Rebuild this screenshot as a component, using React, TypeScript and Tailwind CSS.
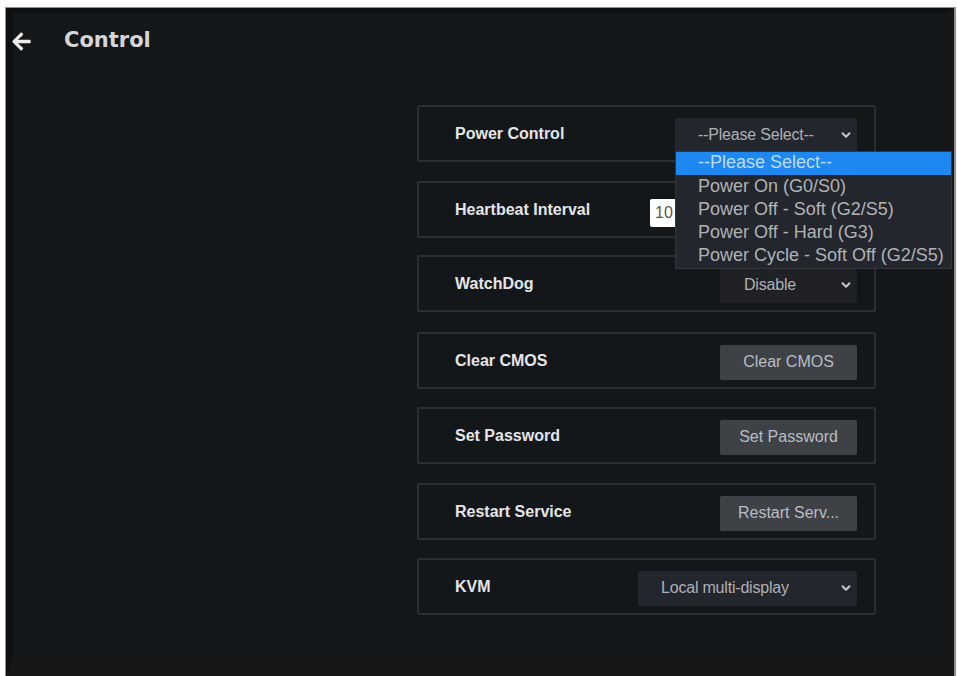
import { ChevronDown } from "lucide-react";
import { FaArrowLeft } from "react-icons/fa";

const MENU_ITEMS = [
  "Power On (G0/S0)",
  "Power Off - Soft (G2/S5)",
  "Power Off - Hard (G3)",
  "Power Cycle - Soft Off (G2/S5)",
];

function FakeSelect({ label, width, textClass, bg }: { label: string; width: string; textClass: string; bg: string }) {
  return (
    <div className={`${width} ${bg} mt-[3px] h-[35px] flex items-center justify-between rounded-[2px] pr-[4px] text-[16px] tracking-[-0.2px] text-[#aeb0b5]`}>
      <span className={textClass}>{label}</span>
      <ChevronDown className="w-[14px] h-[14px] text-[#c4c6ca]" strokeWidth={3.5} />
    </div>
  );
}

function ActionButton({ label }: { label: string }) {
  return (
    <button className="mt-[3px] w-[137px] h-[35px] rounded-[2px] bg-[#3e4146] text-[16px] whitespace-nowrap text-[#b9bdc4] text-center">
      {label}
    </button>
  );
}

function Row({ title, mt, children }: { title: string; mt: string; children: React.ReactNode }) {
  return (
    <div className={`${mt} h-[57px] flex items-center justify-between border-2 border-[#2b2e33] rounded-[2px] pl-[36px] pr-[17px]`}>
      <span className="text-[16px] font-bold text-[#e4e5e7]">{title}</span>
      {children}
    </div>
  );
}

export default function App() {
  return (
    <div className="w-[957px] h-[676px] bg-white pl-[5px] pt-[7px] overflow-hidden font-['Liberation_Sans',Arial,sans-serif]">
      <div className="w-[951px] h-[669px] border-l border-t border-r-2 border-[#8f9092]">
        <div className="relative h-full bg-[#14171a] border-l-[7px] border-l-[#0e0f11] border-t-[5px] border-t-[#0e0f11] border-r-[10px] border-r-[#17171a] border-b-[20px] border-b-[#17171a]">
          <div className="flex items-center h-[56px] -ml-[2px]">
            <FaArrowLeft className="w-[21px] h-[21px] text-[#ececec]" />
            <span className="ml-[32px] text-[21px] font-bold text-[#d6d6d6] font-['DejaVu_Sans',sans-serif]">Control</span>
          </div>

          <div className="ml-[404px] w-[459px] mt-[36px]">
            <Row title="Power Control" mt="">
              <FakeSelect label="--Please Select--" width="w-[182px]" textClass="pl-[23px]" bg="bg-[#23262d]" />
            </Row>
            <Row title="Heartbeat Interval" mt="mt-[19px]">
              <div className="w-[207px] flex items-center">
                <div className="w-[60px] h-[28px] mt-[6px] bg-white rounded-[2px] pl-[5px] text-[16px] leading-[28px] text-[#555]">10</div>
              </div>
            </Row>
            <Row title="WatchDog" mt="mt-[17px]">
              <FakeSelect label="Disable" width="w-[137px]" textClass="pl-[24px]" bg="bg-[#1f2125]" />
            </Row>
            <Row title="Clear CMOS" mt="mt-[20px]">
              <ActionButton label="Clear CMOS" />
            </Row>
            <Row title="Set Password" mt="mt-[18px]">
              <ActionButton label="Set Password" />
            </Row>
            <Row title="Restart Service" mt="mt-[19px]">
              <ActionButton label="Restart Serv..." />
            </Row>
            <Row title="KVM" mt="mt-[18px]">
              <FakeSelect label="Local multi-display" width="w-[219px]" textClass="pl-[23px]" bg="bg-[#23262d]" />
            </Row>
          </div>

          <div className="absolute left-[662px] top-[138px] w-[277px] h-[118px] bg-[#23262d] border border-[#33363b] text-[18px] leading-[23px] text-[#b0b2b6]">
            <div className="h-[23px] bg-[#1e88f0] pl-[22px] leading-[20px] text-[#bcdcf8]">--Please Select--</div>
            {MENU_ITEMS.map((item) => (
              <div key={item} className="pl-[22px] whitespace-nowrap">{item}</div>
            ))}
          </div>
        </div>
      </div>
    </div>
  );
}
